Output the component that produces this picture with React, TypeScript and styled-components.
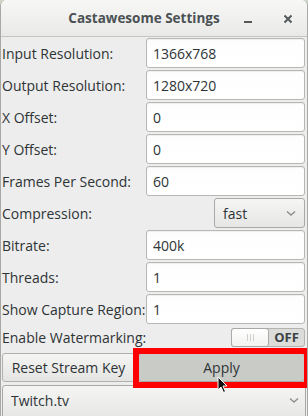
import { Fragment } from 'react';
import styled, { createGlobalStyle } from 'styled-components';

const GlobalStyle = createGlobalStyle`
  html, body {
    margin: 0;
    padding: 0;
    background: #cfd8c8;
  }
  #root {
    width: 308px;
    height: 416px;
    overflow: hidden;
  }
`;

const Window = styled.div`
  position: relative;
  width: 308px;
  height: 416px;
  background: #ededed;
  border-radius: 6px 6px 0 0;
  box-sizing: border-box;
  border-left: 1px solid #a8a8a6;
  border-right: 1px solid #a8a8a6;
  font-family: 'Open Sans', 'DejaVu Sans', sans-serif;
  font-size: 14px;
  color: #2e3436;
  overflow: hidden;
`;

const TitleBar = styled.div`
  position: relative;
  height: 37px;
  display: flex;
  align-items: center;
  justify-content: center;
  background: linear-gradient(#f7f7f6, #e9e9e7);
  border-bottom: 1px solid #c4c4c1;
  box-sizing: border-box;
`;

const Title = styled.div`
  font-weight: bold;
  font-size: 13.5px;
  color: #4a5154;
  margin-left: -20px;
`;

const TitleButtons = styled.div`
  position: absolute;
  right: 14px;
  top: 0;
  height: 37px;
  display: flex;
  align-items: center;
  gap: 31px;
`;

const Form = styled.div`
  display: grid;
  grid-template-columns: 144px 1fr;
  row-gap: 2px;
  padding: 1px 1px 0 1px;
`;

const Label = styled.div`
  height: 30px;
  display: flex;
  align-items: center;
  white-space: nowrap;
`;

const Entry = styled.div`
  height: 30px;
  box-sizing: border-box;
  border: 1px solid #b7b7b4;
  border-radius: 3px;
  background: linear-gradient(#fdfdfd, #ffffff);
  box-shadow: inset 0 1px 1px rgba(0, 0, 0, 0.06);
  display: flex;
  align-items: center;
  padding-left: 6px;
  margin-right: 1px;
`;

const Combo = styled.div`
  justify-self: end;
  width: 91px;
  height: 30px;
  box-sizing: border-box;
  border: 1px solid #a9a9a6;
  border-radius: 3px;
  background: linear-gradient(#f5f5f4, #e6e6e4);
  display: flex;
  align-items: center;
  justify-content: space-between;
  padding: 0 8px;
  margin-right: 1px;
`;

const SwitchRow = styled.div`
  grid-column: 1 / 3;
  height: 22px;
  display: flex;
  align-items: center;
  justify-content: space-between;
`;

const Switch = styled.div`
  width: 74px;
  height: 19px;
  box-sizing: border-box;
  border: 1px solid #b3b3b0;
  border-radius: 3px;
  background: #dcdcda;
  display: flex;
  align-items: stretch;
  margin-right: 1px;
`;

const Slider = styled.div`
  width: 36px;
  margin: -1px 0 -1px -1px;
  border: 1px solid #a9a9a6;
  border-radius: 3px;
  background: linear-gradient(#ffffff, #f2f2f1);
  display: flex;
  align-items: center;
  justify-content: center;
  gap: 2px;
`;

const Grip = styled.span`
  width: 1px;
  height: 7px;
  background: #d0d0ce;
`;

const SwitchText = styled.div`
  flex: 1;
  display: flex;
  align-items: center;
  justify-content: center;
  font-weight: bold;
  font-size: 13px;
  color: #3c4244;
`;

const ButtonRow = styled.div`
  display: grid;
  grid-template-columns: 133px 1fr;
  column-gap: 3px;
  padding: 5px 2px 0 1px;
`;

const Button = styled.div<{ $hover?: boolean }>`
  position: relative;
  height: 29px;
  box-sizing: border-box;
  border: 1px solid ${(p) => (p.$hover ? '#a4a6a1' : '#b0b0ad')};
  border-radius: 3px;
  background: ${(p) =>
    p.$hover ? '#c9cbc6' : 'linear-gradient(#f5f5f4, #e4e4e2)'};
  display: flex;
  align-items: center;
  justify-content: center;
`;

const Highlight = styled.span`
  position: absolute;
  left: -6px;
  right: -6px;
  top: -6px;
  bottom: -7px;
  border: 6px solid #ff0000;
  pointer-events: none;
`;

const Cursor = styled.svg`
  position: absolute;
  left: 216px;
  top: 376px;
`;

const ServiceCombo = styled.div`
  margin: 3px 1px 0 1px;
  height: 34px;
  box-sizing: border-box;
  border: 1px solid #a9a9a6;
  border-radius: 3px;
  background: linear-gradient(#f5f5f4, #e6e6e4);
  display: flex;
  align-items: center;
  justify-content: space-between;
  padding: 0 6px 4px 8px;
`;

const Chevron = () => (
  <svg width="10" height="7" viewBox="0 0 10 7">
    <path d="M1 1.5 L5 5 L9 1.5" fill="none" stroke="#8b8f8f" strokeWidth="1.4" />
  </svg>
);

const fields: [string, string][] = [
  ['Input Resolution:', '1366x768'],
  ['Output Resolution:', '1280x720'],
  ['X Offset:', '0'],
  ['Y Offset:', '0'],
  ['Frames Per Second:', '60'],
];

const more: [string, string][] = [
  ['Bitrate:', '400k'],
  ['Threads:', '1'],
  ['Show Capture Region:', '1'],
];

export default function App() {
  return (
    <>
      <GlobalStyle />
      <Window>
        <TitleBar>
          <Title>Castawesome Settings</Title>
          <TitleButtons>
            <svg width="8" height="10" viewBox="0 0 8 10">
              <rect x="0" y="7" width="8" height="2" fill="#55595a" />
            </svg>
            <svg width="10" height="10" viewBox="0 0 10 10">
              <path d="M1.5 1.5 L8.5 8.5 M8.5 1.5 L1.5 8.5" stroke="#55595a" strokeWidth="2" />
            </svg>
          </TitleButtons>
        </TitleBar>
        <Form>
          {fields.map(([label, value]) => (
            <Fragment key={label}>
              <Label>{label}</Label>
              <Entry>{value}</Entry>
            </Fragment>
          ))}
          <Label>Compression:</Label>
          <Combo>
            <span>fast</span>
            <Chevron />
          </Combo>
          {more.map(([label, value]) => (
            <Fragment key={label}>
              <Label>{label}</Label>
              <Entry>{value}</Entry>
            </Fragment>
          ))}
          <SwitchRow>
            <span>Enable Watermarking:</span>
            <Switch>
              <Slider>
                <Grip />
                <Grip />
                <Grip />
              </Slider>
              <SwitchText>OFF</SwitchText>
            </Switch>
          </SwitchRow>
        </Form>
        <ButtonRow>
          <Button>Reset Stream Key</Button>
          <Button $hover>
            Apply
            <Highlight />
          </Button>
        </ButtonRow>
        <ServiceCombo>
          <span>Twitch.tv</span>
          <Chevron />
        </ServiceCombo>
        <Cursor width="12" height="18" viewBox="0 0 12 18">
          <path d="M1 1 L1 14 L4 11 L6.5 16.5 L8.5 15.5 L6 10 L10 10 Z" fill="#111" stroke="#fff" strokeWidth="1" />
        </Cursor>
      </Window>
    </>
  );
}
